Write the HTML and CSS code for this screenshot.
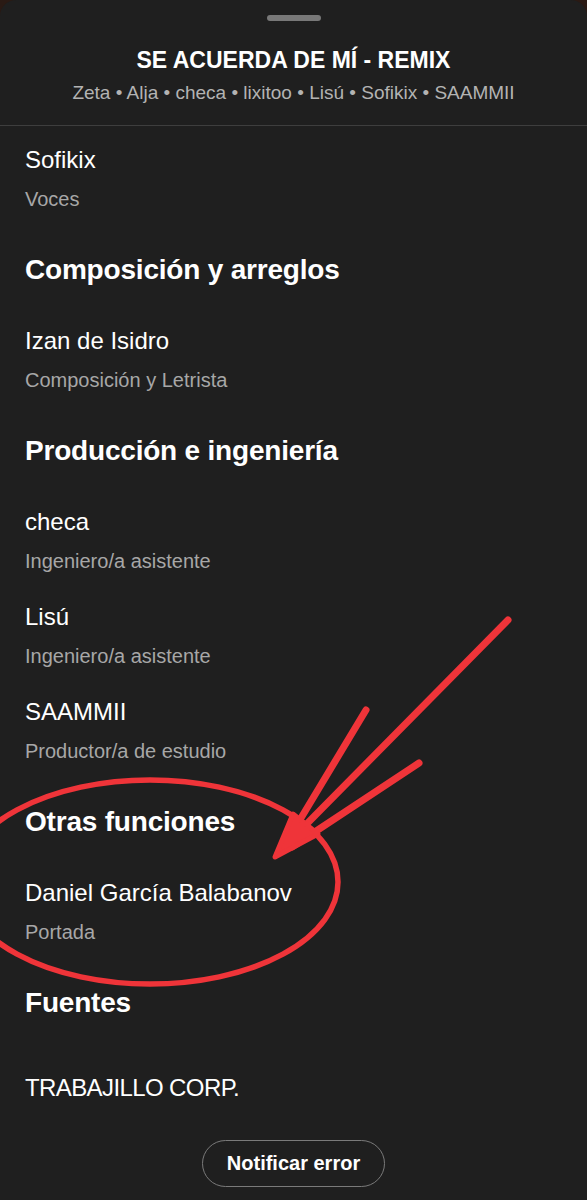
FILE: index.html
```html
<!DOCTYPE html>
<html lang="es">
  <head>
    <title>Créditos</title>
    <meta charset="UTF-8" />
    <meta name="viewport" content="width=device-width, initial-scale=1.0" />
    <link rel="stylesheet" href="styles.css">
  </head>

  <body>
    <div class="sheet">
      <header class="sheet-header">
        <div class="handle"></div>
        <h1 class="track-title">SE ACUERDA DE MÍ - REMIX</h1>
        <p class="track-artists">Zeta • Alja • checa • lixitoo • Lisú • Sofikix • SAAMMII</p>
      </header>

      <main class="credits">
        <section class="credit-group">
          <div class="credit">
            <p class="credit-name">Sofikix</p>
            <p class="credit-role">Voces</p>
          </div>
        </section>

        <section class="credit-group">
          <h2>Composición y arreglos</h2>
          <div class="credit">
            <p class="credit-name">Izan de Isidro</p>
            <p class="credit-role">Composición y Letrista</p>
          </div>
        </section>

        <section class="credit-group">
          <h2>Producción e ingeniería</h2>
          <div class="credit">
            <p class="credit-name">checa</p>
            <p class="credit-role">Ingeniero/a asistente</p>
          </div>
          <div class="credit">
            <p class="credit-name">Lisú</p>
            <p class="credit-role">Ingeniero/a asistente</p>
          </div>
          <div class="credit">
            <p class="credit-name">SAAMMII</p>
            <p class="credit-role">Productor/a de estudio</p>
          </div>
        </section>

        <section class="credit-group">
          <h2>Otras funciones</h2>
          <div class="credit">
            <p class="credit-name">Daniel García Balabanov</p>
            <p class="credit-role">Portada</p>
          </div>
        </section>

        <section class="credit-group">
          <h2>Fuentes</h2>
          <div class="credit credit-source">
            <p class="credit-name">TRABAJILLO CORP.</p>
          </div>
        </section>
      </main>

      <div class="report">
        <button class="btn-report" type="button">Notificar error</button>
      </div>
    </div>

    <!-- marca roja dibujada encima -->
    <svg class="scribble" width="587" height="1200" viewBox="0 0 587 1200">
      <ellipse cx="150" cy="882" rx="188" ry="102" />
      <path d="M508 620 L280 851" />
      <path d="M366 710 L286 843" />
      <path d="M419 763 L292 847" />
      <polygon points="275,857 293,814 318,834" />
    </svg>
  </body>
</html>
```

FILE: styles.css
```css
body {
  font-family: "Liberation Sans", Arial, sans-serif;
  background-color: #2a1a14;
  color: #fff;
  margin: 0;
  height: 1200px;
  overflow: hidden;
  position: relative;
}

p,
h1,
h2 {
  margin: 0;
}

.sheet {
  background-color: #1f1f1f;
  border-radius: 16px 16px 0 0;
  min-height: 100vh;
}

.sheet-header {
  padding: 15px 20px 20px;
  text-align: center;
  border-bottom: 1px solid #3e3e3e;
}

.handle {
  width: 54px;
  height: 6px;
  border-radius: 3px;
  background-color: #787878;
  margin: 0 auto;
}

.track-title {
  margin-top: 25px;
  font-size: 23px;
  line-height: 28px;
  font-weight: bold;
}

.track-artists {
  margin-top: 7px;
  font-size: 19px;
  line-height: 24px;
  color: #b3b3b3;
}

.credits {
  display: flex;
  flex-direction: column;
  gap: 42px;
  padding: 20px 25px 0;
}

.credit-group {
  display: flex;
  flex-direction: column;
  gap: 30px;
}

.credit-group h2 {
  font-size: 28px;
  line-height: 34px;
  font-weight: bold;
  letter-spacing: -0.2px;
  margin-bottom: 10px;
}

.credit-name {
  font-size: 24px;
  line-height: 28px;
}

.credit-role {
  margin-top: 13px;
  font-size: 20px;
  line-height: 24px;
  color: #a7a7a7;
}

.credit-source {
  padding-top: 14px;
}

.credit-source .credit-name {
  letter-spacing: -0.6px;
}

.report {
  padding-top: 38px;
  display: flex;
  justify-content: center;
}

.btn-report {
  height: 47px;
  padding: 0 24px;
  background: transparent;
  color: #fff;
  border: 1.5px solid #7a7a7a;
  border-radius: 24px;
  font-family: inherit;
  font-size: 20px;
  font-weight: bold;
  cursor: pointer;
}

.scribble {
  position: absolute;
  top: 0;
  left: 0;
  pointer-events: none;
  fill: none;
  stroke: #ef3439;
  stroke-linecap: round;
  stroke-linejoin: round;
}

.scribble ellipse {
  stroke-width: 5.5;
}

.scribble path {
  stroke-width: 7;
}

.scribble polygon {
  fill: #ef3439;
  stroke-width: 5;
}
```
